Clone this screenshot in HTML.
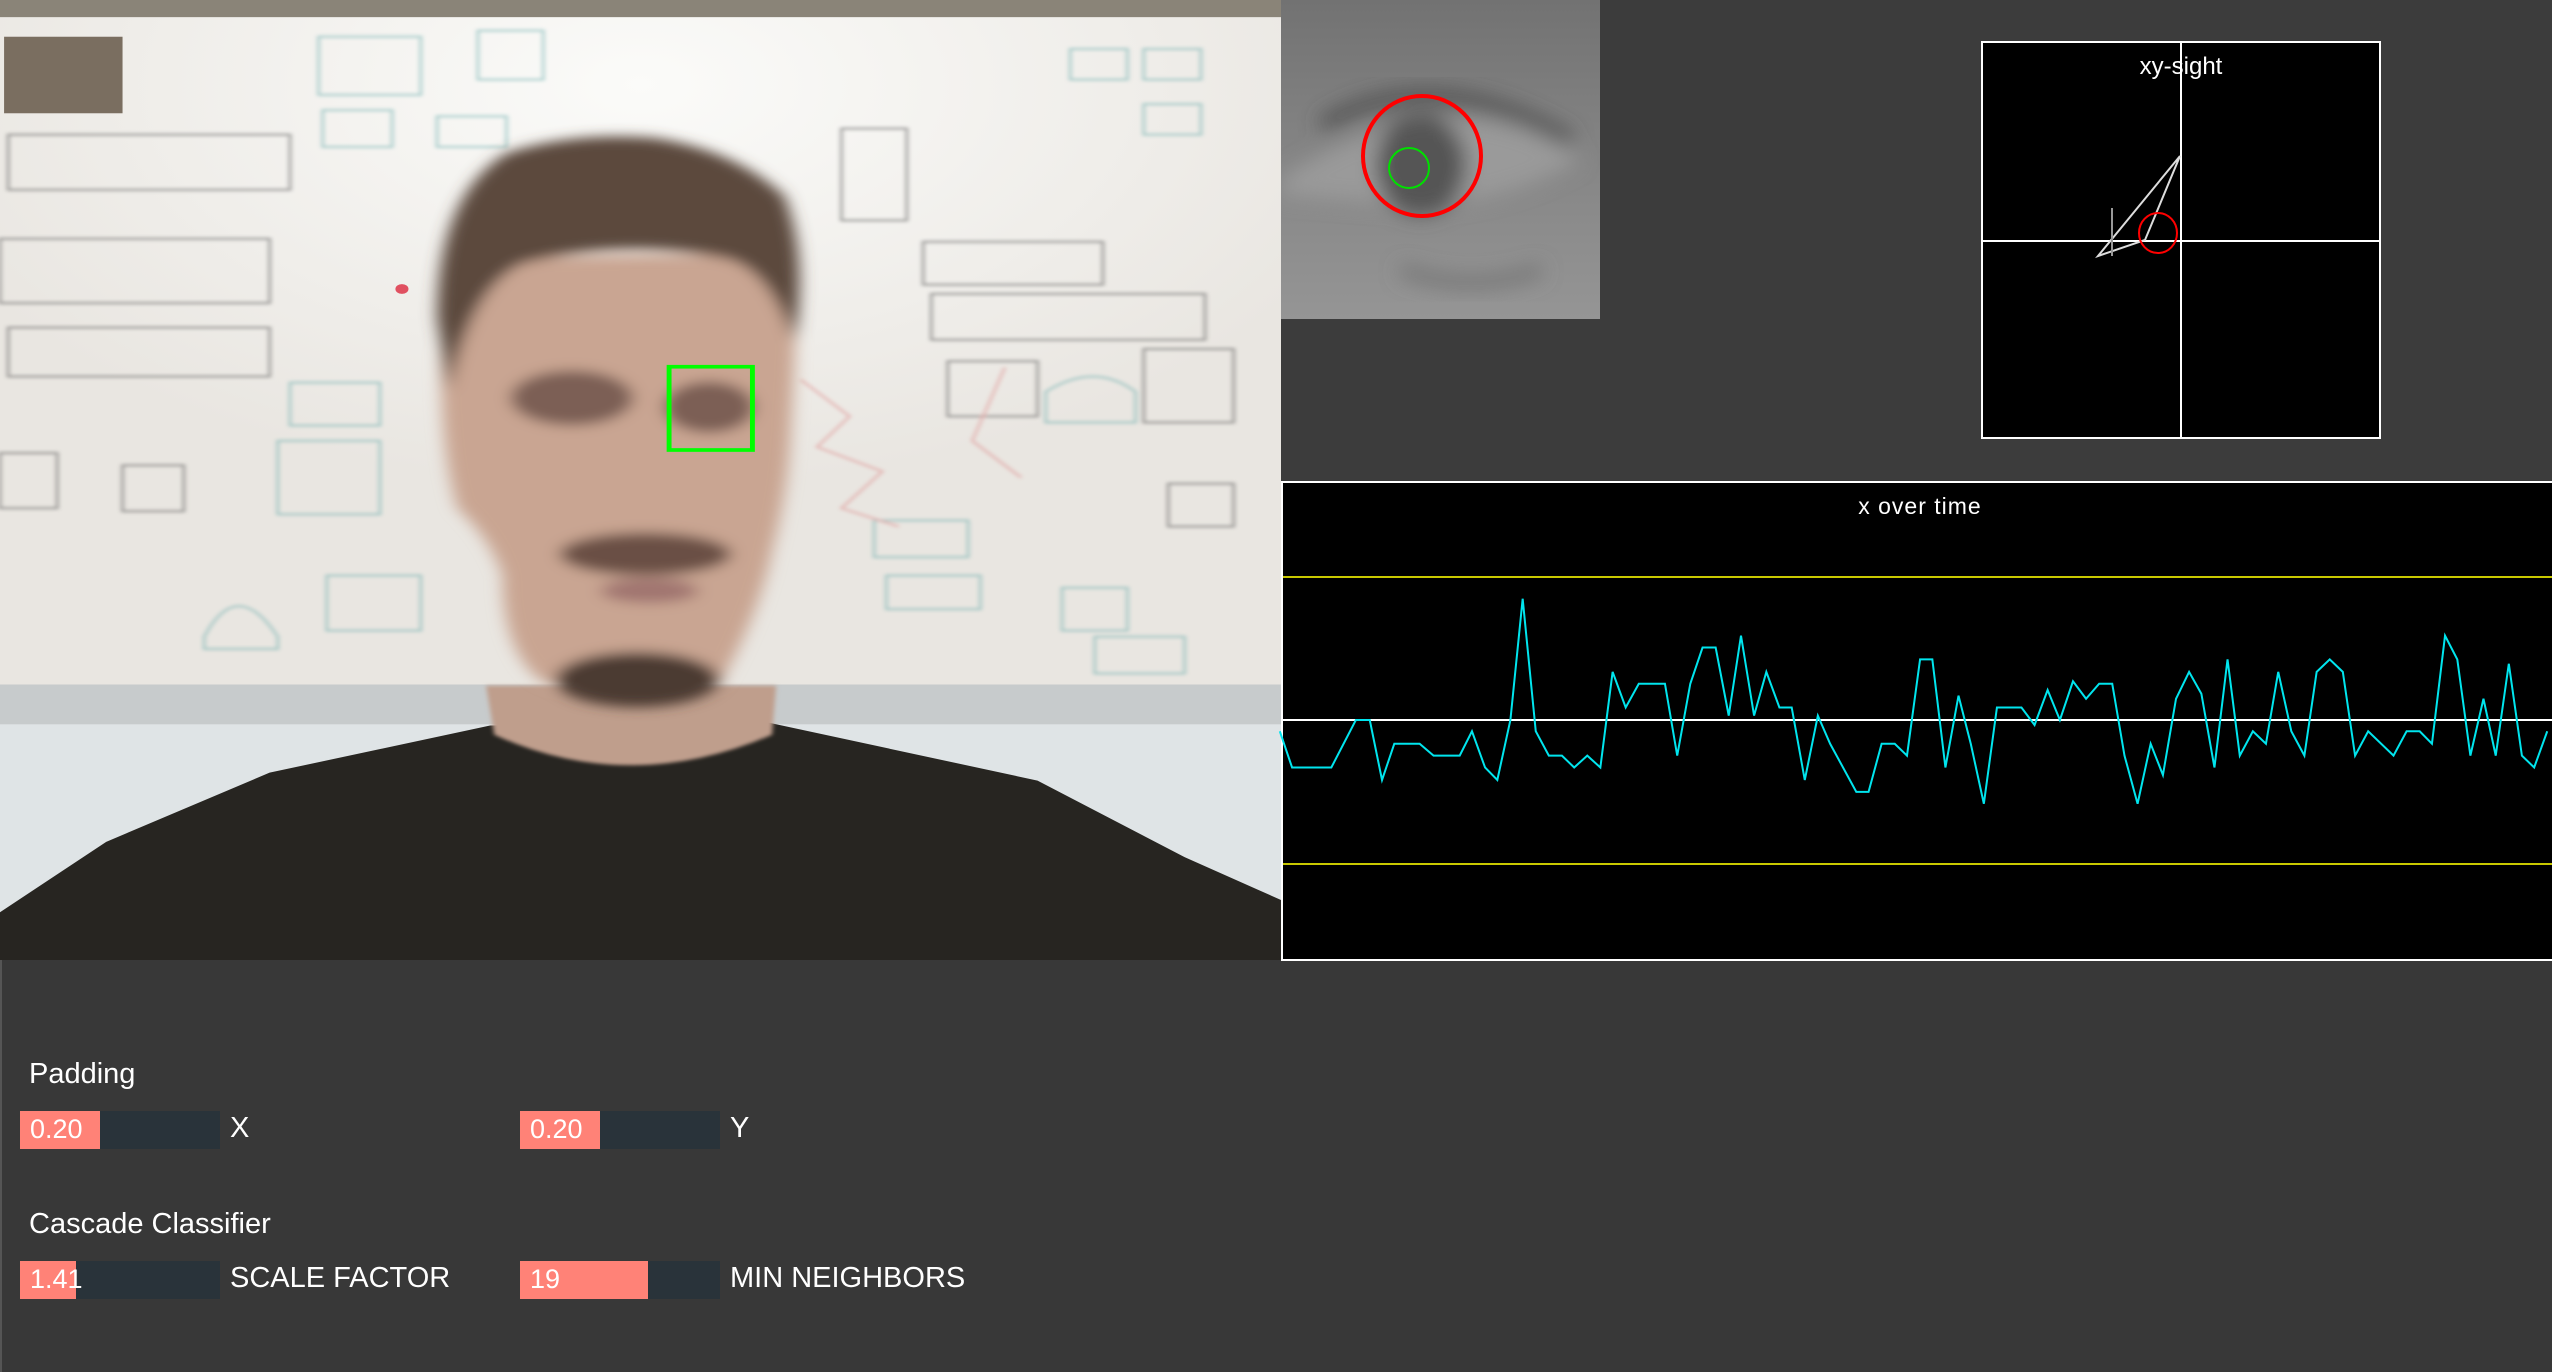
<!DOCTYPE html>
<html><head><meta charset="utf-8"><style>
html,body{margin:0;padding:0;width:2552px;height:1372px;overflow:hidden;background:#3c3c3c;font-family:"Liberation Sans",sans-serif}
.abs{position:absolute}
.lbl{color:#fff;font-size:29px;position:absolute}
.sl{position:absolute;height:38px;width:200px;background:#29333a}
.sl .f{position:absolute;left:0;top:0;bottom:0;background:#ff8277}
.sl span{position:absolute;left:10px;top:3px;color:#fff;font-size:27px}
</style></head><body>
<div class="abs" style="left:0;top:960px;width:2552px;height:412px;background:#383838;border-left:2px solid #555;box-sizing:border-box"></div>

<svg class="abs" style="left:0;top:0" width="1281" height="960" viewBox="0 0 1568 1568" preserveAspectRatio="none">
<defs>
<filter id="b" x="-20%" y="-20%" width="140%" height="140%"><feGaussianBlur stdDeviation="10"/></filter>
<filter id="b2"><feGaussianBlur stdDeviation="3"/></filter>
<radialGradient id="gl" cx="0.5" cy="0.1" r="0.6"><stop offset="0" stop-color="#fbfbf9"/><stop offset="1" stop-color="#e9e6e1"/></radialGradient>
</defs>
<rect width="1568" height="1568" fill="#dfe4e6"/>
<rect width="1568" height="32" fill="#8a8478"/>
<rect x="0" y="28" width="1568" height="1100" fill="url(#gl)"/>
<rect x="0" y="1118" width="1568" height="65" fill="#c7cbcc"/>
<rect x="5" y="60" width="145" height="125" fill="#7a6e60"/>
<g fill="none" stroke-width="3" opacity="0.6" filter="url(#b2)">
<g stroke="#6aa">
<rect x="390" y="60" width="125" height="95"/><rect x="395" y="180" width="85" height="60"/><rect x="585" y="50" width="80" height="80"/><rect x="535" y="190" width="85" height="50"/>
<rect x="355" y="625" width="110" height="70"/><rect x="340" y="720" width="125" height="120"/><path d="M250 1040 q40 -100 90 0 v20 h-90z"/><rect x="400" y="940" width="115" height="90"/>
<rect x="1070" y="850" width="115" height="60"/><rect x="1085" y="940" width="115" height="55"/><rect x="1300" y="960" width="80" height="70"/><rect x="1340" y="1040" width="110" height="60"/>
<path d="M1280 640 q60 -50 110 0 v50 h-110z"/><rect x="1310" y="80" width="70" height="50"/><rect x="1400" y="80" width="70" height="50"/><rect x="1400" y="170" width="70" height="50"/>
</g>
<g stroke="#555">
<rect x="10" y="220" width="345" height="90"/><rect x="0" y="390" width="330" height="105"/><rect x="10" y="535" width="320" height="80"/>
<rect x="1030" y="210" width="80" height="150"/><rect x="1130" y="395" width="220" height="70"/><rect x="1140" y="480" width="335" height="75"/>
<rect x="1160" y="590" width="110" height="90"/><rect x="1400" y="570" width="110" height="120"/><rect x="1430" y="790" width="80" height="70"/>
<rect x="0" y="740" width="70" height="90"/><rect x="150" y="760" width="75" height="75"/>
</g>
<g stroke="#d88"><path d="M980 620 l60 60 l-40 50 l80 40 l-50 60 l70 30"/><path d="M1230 600 l-40 120 l60 60"/></g>
</g>
<circle cx="492" cy="472" r="8" fill="#e05060"/>
<path d="M0 1568 L0 1490 L130 1375 L330 1262 L600 1185 L940 1180 L1270 1275 L1450 1400 L1568 1470 L1568 1568 Z" fill="#272521"/>
<path d="M595 1120 L950 1120 L945 1200 Q770 1300 605 1200 Z" fill="#bf9e8c" filter="url(#b2)"/>
<g filter="url(#b)">
<path d="M545 430 Q530 700 560 830 Q600 880 615 940 Q615 1060 660 1110 Q760 1175 880 1120 Q930 1000 945 900 Q965 800 968 700 Q975 560 975 420 Q760 410 545 430 Z" fill="#c9a592"/>
<path d="M535 520 Q535 320 620 250 Q700 215 800 225 Q900 245 960 320 Q990 420 972 560 Q940 430 880 420 Q760 390 640 430 Q575 470 550 640 Z" fill="#5b4a3e"/>
<ellipse cx="700" cy="650" rx="75" ry="45" fill="#7b5e55"/>
<ellipse cx="868" cy="665" rx="55" ry="42" fill="#7b5e55"/>
<ellipse cx="790" cy="905" rx="105" ry="35" fill="#6b5045"/>
<ellipse cx="795" cy="965" rx="60" ry="20" fill="#a07570"/>
<ellipse cx="780" cy="1110" rx="100" ry="45" fill="#4b3b33"/>
</g>
<rect x="819" y="599" width="102" height="136" fill="none" stroke="#00ff00" stroke-width="6"/>
</svg>

<svg class="abs" style="left:1281px;top:0" width="319" height="319" viewBox="0 0 319 319">
<defs><filter id="eb"><feGaussianBlur stdDeviation="10"/></filter>
<linearGradient id="eg" x1="0" y1="0" x2="0" y2="1"><stop offset="0" stop-color="#727272"/><stop offset="0.5" stop-color="#858585"/><stop offset="1" stop-color="#959595"/></linearGradient></defs>
<rect width="319" height="319" fill="url(#eg)"/>
<g filter="url(#eb)">
<path d="M0 180 Q100 110 200 120 Q260 130 300 160 Q220 205 130 205 Q60 200 0 195Z" fill="#9a9a9a"/>
<ellipse cx="140" cy="165" rx="45" ry="50" fill="#555"/>
<path d="M40 125 Q150 60 290 140" stroke="#4a4a4a" stroke-width="12" fill="none"/>
<path d="M120 270 Q190 295 260 270" stroke="#6e6e6e" stroke-width="10" fill="none"/>
</g>
<ellipse cx="141" cy="156" rx="59" ry="60" fill="none" stroke="#ff0000" stroke-width="4"/>
<ellipse cx="128" cy="168" rx="20" ry="20" fill="none" stroke="#00e000" stroke-width="2"/>
</svg>

<div class="abs" style="left:1981px;top:41px;width:400px;height:398px;background:#000;border:2px solid #fff;box-sizing:border-box"></div>
<svg class="abs" style="left:0;top:0" width="2552" height="1372">
<line x1="2181" y1="42" x2="2181" y2="438" stroke="#fff" stroke-width="2"/>
<line x1="1982" y1="241" x2="2380" y2="241" stroke="#fff" stroke-width="2"/>
<polygon points="2180,156 2098,256 2145,240" fill="none" stroke="#ddd" stroke-width="2"/>
<line x1="2112" y1="208" x2="2112" y2="256" stroke="#999" stroke-width="2"/>
<ellipse cx="2158" cy="233" rx="19" ry="20" fill="none" stroke="#ff0000" stroke-width="2"/>
<text x="2181" y="74" fill="#fff" font-family="Liberation Sans, sans-serif" font-size="24" text-anchor="middle">xy-sight</text>
</svg>

<div class="abs" style="left:1281px;top:481px;width:1280px;height:480px;background:#000;border:2px solid #fff;box-sizing:border-box"></div>
<svg class="abs" style="left:0;top:0" width="2552" height="1372">
<line x1="1283" y1="577" x2="2552" y2="577" stroke="#c8c800" stroke-width="2"/>
<line x1="1283" y1="864" x2="2552" y2="864" stroke="#c8c800" stroke-width="2"/>
<line x1="1283" y1="720" x2="2552" y2="720" stroke="#fff" stroke-width="2"/>
<text x="1920" y="514" fill="#fff" font-family="Liberation Sans, sans-serif" font-size="23" text-anchor="middle" letter-spacing="1">x over time</text>
<g transform="translate(1270,0) scale(0.8177,0.625)">
<polyline fill="none" stroke="#00e5ee" stroke-width="2" vector-effect="non-scaling-stroke" points="12,1170 27,1228 75,1228 105,1152 122,1152 137,1248 152,1190 183,1190 200,1209 232,1209 247,1170 263,1228 278,1248 294,1152 309,958 325,1170 341,1209 357,1209 372,1228 388,1209 404,1228 419,1075 435,1132 451,1094 483,1094 498,1209 514,1094 529,1036 545,1036 561,1145 576,1017 592,1145 607,1075 623,1132 638,1132 654,1248 670,1145 685,1190 717,1267 732,1267 748,1190 764,1190 779,1209 795,1055 810,1055 826,1228 842,1113 857,1190 873,1286 889,1132 919,1132 935,1160 951,1104 966,1152 982,1090 998,1118 1014,1094 1030,1094 1045,1209 1061,1286 1077,1190 1092,1240 1108,1118 1124,1075 1139,1110 1155,1228 1171,1055 1186,1209 1202,1170 1218,1190 1233,1075 1249,1170 1265,1209 1280,1075 1296,1055 1312,1075 1327,1209 1343,1170 1374,1209 1390,1170 1406,1170 1421,1190 1437,1017 1452,1055 1468,1209 1484,1118 1499,1209 1515,1062 1531,1209 1546,1228 1562,1170"/>
</g>
</svg>

<div class="lbl" style="left:29px;top:1058px">Padding</div>
<div class="sl" style="left:20px;top:1111px"><div class="f" style="width:80px"></div><span>0.20</span></div>
<div class="lbl" style="left:230px;top:1112px">X</div>
<div class="sl" style="left:520px;top:1111px"><div class="f" style="width:80px"></div><span>0.20</span></div>
<div class="lbl" style="left:730px;top:1112px">Y</div>
<div class="lbl" style="left:29px;top:1208px">Cascade Classifier</div>
<div class="sl" style="left:20px;top:1261px"><div class="f" style="width:56px"></div><span>1.41</span></div>
<div class="lbl" style="left:230px;top:1262px">SCALE FACTOR</div>
<div class="sl" style="left:520px;top:1261px"><div class="f" style="width:128px"></div><span>19</span></div>
<div class="lbl" style="left:730px;top:1262px">MIN NEIGHBORS</div>
</body></html>
